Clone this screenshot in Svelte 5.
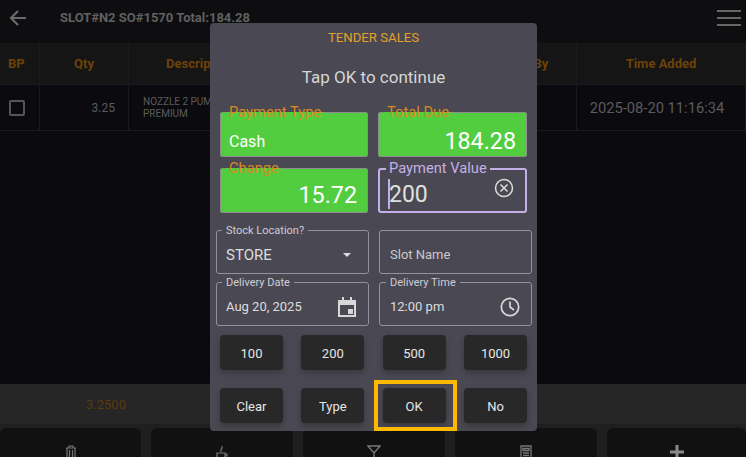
<script>
	const amounts = ['100', '200', '500', '1000'];
</script>

<div class="screen">
	<header class="topbar">
		<svg class="back" viewBox="0 0 24 24" width="24" height="24" fill="none" stroke="#6a6a6a" stroke-width="2.2">
			<path d="M20 12H5M12 5l-7 7 7 7" />
		</svg>
		<span class="slot">SLOT#N2 SO#1570 Total:184.28</span>
		<div class="burger"><i></i><i></i><i></i></div>
	</header>

	<div class="table-row head">
		<div class="bp">BP</div>
		<div>Qty</div>
		<div>Description</div>
		<div></div>
		<div>Added By</div>
		<div>Time Added</div>
	</div>
	<div class="table-row item">
		<div><span class="check"></span></div>
		<div class="qty">3.25</div>
		<div class="desc">NOZZLE 2 PUMP PREMIUM</div>
		<div></div>
		<div></div>
		<div class="time">2025-08-20 11:16:34</div>
	</div>

	<div class="spacer"></div>

	<div class="summary"><span>3.2500</span></div>

	<nav class="actions">
		<button aria-label="Delete">
			<svg viewBox="0 0 12 14" width="12" height="14" fill="none" stroke="#777" stroke-width="1.2">
				<path d="M1 3h10M4 3V1h4v2M2 3v11h8V3M4.500 5v9M7.500 5v9" />
			</svg>
		</button>
		<button aria-label="Drinks">
			<svg viewBox="0 0 14 14" width="14" height="14" fill="none" stroke="#777" stroke-width="1.2">
				<path d="M2 8h8v5H2zM10 9h2v2h-2M6 7V5l1-2V1M1 13.500h11" />
			</svg>
		</button>
		<button aria-label="Filter">
			<svg viewBox="0 0 14 14" width="14" height="14" fill="none" stroke="#777" stroke-width="1.4">
				<path d="M1 1h12L7 8zM7 8v6" />
			</svg>
		</button>
		<button aria-label="Calculator">
			<svg viewBox="0 0 12 14" width="12" height="14" fill="none" stroke="#777" stroke-width="1.3">
				<path d="M1 1h10v13H1zM3 3.500h6v2H3zM3 8h6M3 10.500h6" />
			</svg>
		</button>
		<button aria-label="Add">
			<svg viewBox="0 0 14 14" width="14" height="14" fill="none" stroke="#8a8a8a" stroke-width="3">
				<path d="M7 0v14M0 7h14" />
			</svg>
		</button>
	</nav>

	<div class="dialog">
		<h2>TENDER SALES</h2>
		<p class="message">Tap OK to continue</p>

		<div class="totals">
			<fieldset class="green top">
				<legend>Payment Type</legend>
				<span class="cash">Cash</span>
			</fieldset>
			<fieldset class="green top">
				<legend>Total Due</legend>
				<span class="amount">184.28</span>
			</fieldset>
			<fieldset class="green">
				<legend>Change</legend>
				<span class="amount">15.72</span>
			</fieldset>
			<fieldset class="payment">
				<legend>Payment Value</legend>
				<span class="entry"><b class="caret"></b>200</span>
				<svg class="clear" viewBox="0 0 20 20" width="20" height="20" fill="none" stroke="#ddd" stroke-width="1.5">
					<circle cx="10" cy="10" r="8.500" />
					<path d="M6.500 6.500l7 7M13.500 6.500l-7 7" />
				</svg>
			</fieldset>
		</div>

		<div class="details">
			<fieldset class="outlined">
				<legend>Stock Location?</legend>
				<span class="store">STORE</span>
				<svg class="caret-down" viewBox="0 0 10 6" width="8" height="5" fill="#ddd"><path d="M0 0h10L5 5z" /></svg>
			</fieldset>
			<fieldset class="outlined plain right">
				<span class="placeholder">Slot Name</span>
			</fieldset>
			<fieldset class="outlined">
				<legend>Delivery Date</legend>
				<span class="value">Aug 20, 2025</span>
				<svg viewBox="0 0 20 22" width="20" height="22" fill="none" stroke="#d8d8d8" stroke-width="2">
					<path d="M2 5h16v15H2zM6 1v4M14 1v4" />
					<path d="M2 6h16v3H2z" fill="#d8d8d8" stroke="none" />
					<path d="M11 13h5v5h-5z" fill="#d8d8d8" stroke="none" />
				</svg>
			</fieldset>
			<fieldset class="outlined right">
				<legend>Delivery Time</legend>
				<span class="value">12:00 pm</span>
				<svg viewBox="0 0 20 20" width="20" height="20" fill="none" stroke="#d8d8d8" stroke-width="1.700">
					<circle cx="10" cy="10" r="8.700" />
					<path d="M10 4.500V10l4 3" />
				</svg>
			</fieldset>
		</div>

		<div class="keys">
			{#each amounts as amount}
				<button>{amount}</button>
			{/each}
			<button>Clear</button>
			<button>Type</button>
			<div class="highlighted">
				<button>OK</button>
				<span class="highlight"></span>
			</div>
			<button>No</button>
		</div>
	</div>
</div>

<style>
	:global(body) {
		margin: 0;
		background: #0a0a0f;
		font-family: Roboto, sans-serif;
	}

	.screen {
		position: relative;
		display: flex;
		flex-direction: column;
		width: 746px;
		height: 457px;
		overflow: hidden;
		background: #0a0a0f;
	}

	.topbar {
		display: flex;
		align-items: center;
		height: 35px;
		padding: 0 5px 8px 6px;
		background: #0e0e10;
		flex: none;
	}

	.slot {
		margin-left: 30px;
		font-size: 13px;
		font-weight: 700;
		color: #606060;
	}

	.burger {
		display: flex;
		flex-direction: column;
		gap: 5px;
		margin-left: auto;
		margin-top: 1px;
	}

	.burger i {
		display: block;
		width: 24px;
		height: 2px;
		background: #666;
	}

	.table-row {
		display: grid;
		grid-template-columns: 40px 89px 142px 1fr 112px 169px;
		flex: none;
		border-bottom: 1px solid #1b1b1e;
	}

	.table-row > div {
		display: flex;
		align-items: center;
		border-right: 1px solid #1b1b1e;
	}

	.head {
		height: 41px;
		background: #151515;
		font-size: 13px;
		font-weight: 700;
		color: #6c4208;
	}

	.head > div {
		justify-content: center;
	}

	.head > .bp {
		justify-content: flex-start;
		padding-left: 8px;
	}

	.item {
		height: 45px;
		color: #5c5c5c;
	}

	.check {
		display: block;
		width: 12px;
		height: 12px;
		margin-left: 9px;
		border: 2px solid #555;
		border-radius: 2px;
	}

	.qty {
		justify-content: flex-end;
		padding-right: 13px;
		font-size: 12px;
	}

	.desc {
		padding: 0 40px 0 14px;
		font-size: 10px;
		line-height: 12px;
	}

	.time {
		justify-content: center;
		padding-right: 8px;
		font-size: 14.700px;
	}

	.spacer {
		flex: 1;
	}

	.summary {
		flex: none;
		height: 40px;
		padding-left: 86px;
		background: #262626;
		font-size: 13px;
		line-height: 41px;
		color: #59390f;
	}

	.actions {
		display: grid;
		grid-template-columns: 141px 142px 142px 142px 1fr;
		gap: 10px;
		flex: none;
		height: 33px;
		background: #1f1f1f;
	}

	.actions button {
		display: flex;
		justify-content: center;
		padding: 17px 0 0;
		border: none;
		border-radius: 6px 6px 0 0;
		background: #111112;
		margin-top: 4px;
		height: 29px;
		overflow: hidden;
	}

	.actions svg {
		flex: none;
	}

	.dialog {
		position: absolute;
		top: 23px;
		left: 210px;
		box-sizing: border-box;
		width: 327px;
		height: 408px;
		border-radius: 4px;
		background: #4a4852;
		color: #ddd;
	}

	h2 {
		margin: 0;
		height: 30px;
		font-size: 13.200px;
		font-weight: 400;
		line-height: 30px;
		text-align: center;
		color: #e5a02a;
	}

	.message {
		height: 30px;
		margin: 9px 0 12px;
		font-size: 17px;
		line-height: 30px;
		text-align: center;
		color: #d6d6d6;
	}

	fieldset {
		display: flex;
		align-items: center;
		justify-content: space-between;
		box-sizing: border-box;
		min-width: 0;
		margin: 0;
		border-radius: 3px;
	}

	.totals {
		display: grid;
		grid-template-columns: 148px 149px;
		gap: 3px 10px;
		padding: 0 10px;
	}

	.green,
	.payment {
		height: 53px;
		padding: 0 8px;
	}

	.green.top {
		padding-top: 5px;
	}

	.green legend,
	.payment legend {
		padding: 0 3px;
		margin-left: -3px;
		font-size: 14.700px;
		line-height: 17px;
	}

	.green {
		border: 1px solid #8e8e8e;
		background: #52cd3f;
		color: #fff;
	}

	.green legend {
		color: #d98a1e;
	}

	.cash {
		font-size: 16px;
	}

	.amount {
		margin-left: auto;
		font-size: 23.300px;
		padding-right: 2px;
	}

	.payment {
		border: 2px solid #c4b0e8;
		padding-left: 9px;
		padding-right: 11px;
	}

	.payment legend {
		color: #c4b0e8;
	}

	.entry {
		position: relative;
		font-size: 23px;
		color: #e0e0e0;
	}

	.caret {
		position: absolute;
		left: -1px;
		top: -2px;
		width: 1.500px;
		height: 30px;
		background: #c4b0e8;
	}

	.clear {
		margin-bottom: 12px;
	}

	.details {
		display: grid;
		grid-template-columns: 153px 153px;
		gap: 2px 10px;
		padding: 11px 5px 0 6px;
	}

	.outlined {
		height: 50px;
		padding: 0 11px 0 9px;
		border: 1px solid #93919a;
		font-size: 13px;
	}

	.outlined.right {
		padding-left: 10px;
	}

	.outlined legend {
		padding: 0 4px;
		margin-left: -4px;
		font-size: 11px;
		line-height: 13px;
		color: #cfcdd4;
	}

	.plain {
		align-self: end;
		height: 44px;
	}

	.outlined.plain {
		padding-top: 4px;
	}

	.store {
		font-size: 15px;
	}

	.value {
		margin-bottom: 2px;
	}

	.caret-down {
		margin-right: 6px;
	}

	.placeholder {
		color: #cbc9d0;
	}

	.keys {
		display: grid;
		grid-template-columns: repeat(4, 1fr);
		grid-auto-rows: 35px;
		gap: 18px 18.330px;
		padding: 9px 10px 0;
	}

	.keys button {
		width: 100%;
		height: 35px;
		padding: 2px 0 0;
		border: none;
		border-radius: 4px;
		background: #282828;
		box-shadow: 0 3px 6px rgba(0, 0, 0, 0.25);
		font-family: inherit;
		font-size: 13px;
		font-weight: 400;
		color: #e6e6e6;
	}

	.highlighted {
		position: relative;
	}

	.highlight {
		position: absolute;
		inset: -8px -11px -8px -9px;
		border: 4px solid #fdb900;
		pointer-events: none;
	}
</style>
